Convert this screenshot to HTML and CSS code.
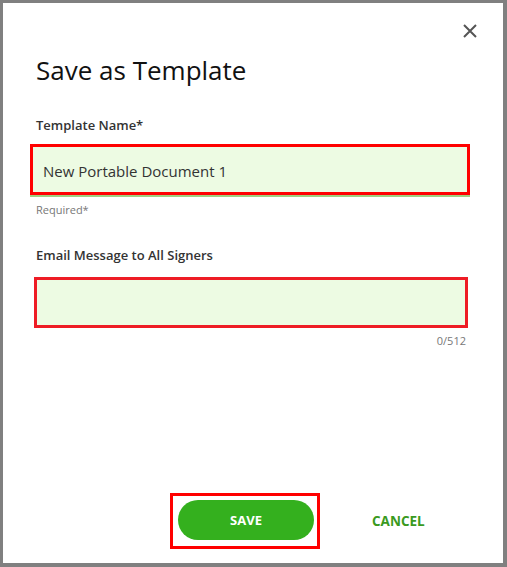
FILE: index.html
```html
<!DOCTYPE html>
<html lang="en">
<head>
    <meta charset="UTF-8">
    <meta name="viewport" content="width=device-width, initial-scale=1.0">
    <title>Save as Template</title>
    <link rel="stylesheet" href="styles.css">
</head>
<body>
    <div class="dialog">
        <button class="close" type="button" aria-label="Close">
            <svg width="16" height="16" viewBox="0 0 16 16">
                <path d="M2 2 L14 14 M14 2 L2 14" stroke="#555" stroke-width="2" fill="none"/>
            </svg>
        </button>
        <h2>Save as Template</h2>

        <!-- Template name -->
        <div class="field">
            <label for="tpl_name">Template Name*</label>
            <div class="box box-name">
                <input type="text" id="tpl_name" value="New Portable Document 1">
            </div>
            <div class="hint">Required*</div>
        </div>

        <!-- Email message -->
        <div class="field field-email">
            <label for="tpl_msg">Email Message to All Signers</label>
            <div class="box box-msg">
                <input type="text" id="tpl_msg">
            </div>
            <div class="counter">0/512</div>
        </div>

        <div class="actions">
            <div class="save-wrap">
                <button class="save" type="button">SAVE</button>
            </div>
            <button class="cancel" type="button">CANCEL</button>
        </div>
    </div>
</body>
</html>
```

FILE: styles.css
```css
html, body {
    margin: 0;
    padding: 0;
}
body {
    font-family: "Open Sans", "Noto Sans", sans-serif;
    background-color: #808080;
    padding: 3px 4px 4px 3px;
    height: 567px;
    box-sizing: border-box;
}
.dialog {
    position: relative;
    background-color: #fff;
    height: 560px;
    box-sizing: border-box;
    padding: 49px 33px 0 33px;
    display: flex;
    flex-direction: column;
}
.close {
    position: absolute;
    top: 17px;
    right: 22px;
    width: 22px;
    height: 22px;
    padding: 3px;
    border: none;
    background: none;
    cursor: pointer;
}
h2 {
    margin: 0;
    font-size: 26px;
    font-weight: 400;
    color: #111;
    line-height: 36px;
}
.field {
    margin-top: 28px;
}
.field label {
    display: block;
    font-size: 13px;
    font-weight: 600;
    color: #333;
    line-height: 18px;
    margin-bottom: 10px;
}
.box {
    border: 3px solid #ff0000;
    background-color: #edfbe3;
    box-sizing: border-box;
    height: 51px;
}
.box-name {
    margin-left: -6px;
    width: 440px;
    box-shadow: 0 2px 0 #9fd07f;
}
.box input {
    width: 100%;
    height: 100%;
    box-sizing: border-box;
    border: none;
    background: transparent;
    font-family: inherit;
    font-size: 15px;
    color: #333;
    padding: 3px 0 0 10px;
    outline: none;
}
.hint {
    font-size: 11px;
    color: #777;
    margin-top: 7px;
}
.field-email {
    margin-top: 29px;
}
.field-email label {
    margin-bottom: 13px;
}
.box-msg {
    margin-left: -2px;
    width: 434px;
    border-color: #ee1c25;
}
.counter {
    width: 430px;
    text-align: right;
    font-size: 11px;
    color: #777;
    margin-top: 5px;
}
.actions {
    margin-top: auto;
    margin-bottom: 14px;
    display: flex;
    align-items: center;
    padding-left: 134px;
    gap: 52px;
}
.save-wrap {
    border: 3px solid #ff0000;
    padding: 4px 3px 6px 5px;
}
.save {
    width: 136px;
    height: 40px;
    border: none;
    border-radius: 20px;
    background-color: #34b01e;
    color: #fff;
    font-family: inherit;
    font-weight: 700;
    font-size: 13px;
    cursor: pointer;
}
.cancel {
    border: none;
    background: none;
    color: #3a9a1e;
    font-family: inherit;
    font-weight: 700;
    font-size: 13.5px;
    padding: 0;
    cursor: pointer;
}
```
